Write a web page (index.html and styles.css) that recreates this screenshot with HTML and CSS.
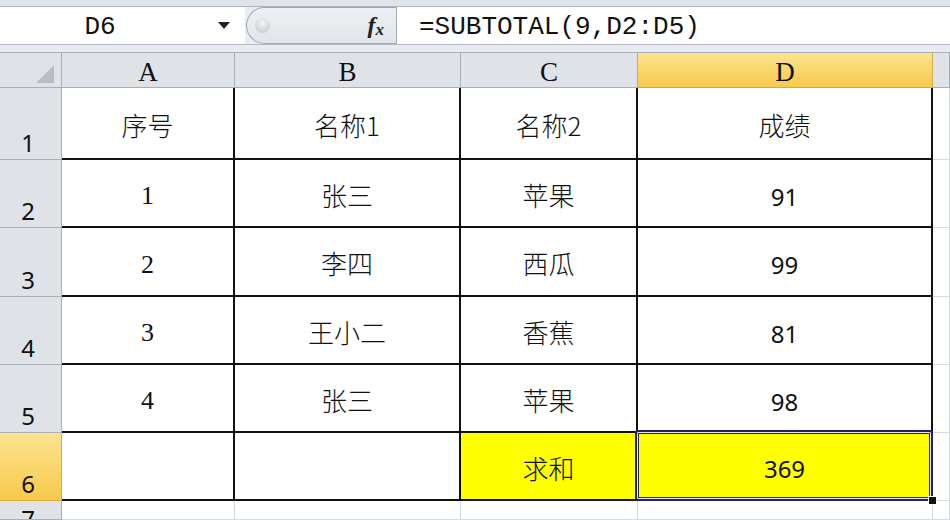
FILE: index.html
```html
<!DOCTYPE html>
<html lang="zh-CN">
<head>
<meta charset="utf-8">
<title>SUBTOTAL</title>
<link rel="stylesheet" href="styles.css">
</head>
<body>
<div class="app">
  <div class="topband"></div>
  <div class="fbar">
    <div class="namebox">
      <span class="name">D6</span>
      <span class="drop"></span>
    </div>
    <div class="ctrl">
      <span class="grip"></span>
      <span class="fx">f<sub>x</sub></span>
    </div>
    <div class="formula">=SUBTOTAL(9,D2:D5)</div>
  </div>
  <div class="gapband"></div>
  <div class="sheet">
    <div class="hd corner"><svg width="20" height="20" viewBox="0 0 20 20"><polygon points="19,1 19,19 1,19" fill="#b8bec6"/></svg></div>
    <div class="hd col">A</div>
    <div class="hd col">B</div>
    <div class="hd col">C</div>
    <div class="hd col on">D</div>
    <div class="hd col"></div>

    <div class="hd row">1</div>
    <div class="c cjk">序号</div>
    <div class="c cjk">名称1</div>
    <div class="c cjk">名称2</div>
    <div class="c cjk">成绩</div>
    <div class="g"></div>

    <div class="hd row">2</div>
    <div class="c serif">1</div>
    <div class="c cjk">张三</div>
    <div class="c cjk">苹果</div>
    <div class="c num">91</div>
    <div class="g"></div>

    <div class="hd row">3</div>
    <div class="c serif">2</div>
    <div class="c cjk">李四</div>
    <div class="c cjk">西瓜</div>
    <div class="c num">99</div>
    <div class="g"></div>

    <div class="hd row">4</div>
    <div class="c serif">3</div>
    <div class="c cjk">王小二</div>
    <div class="c cjk">香蕉</div>
    <div class="c num">81</div>
    <div class="g"></div>

    <div class="hd row">5</div>
    <div class="c serif">4</div>
    <div class="c cjk">张三</div>
    <div class="c cjk">苹果</div>
    <div class="c num">98</div>
    <div class="g"></div>

    <div class="hd row on">6</div>
    <div class="c"></div>
    <div class="c"></div>
    <div class="c cjk yel">求和</div>
    <div class="c num yel sel">369<span class="handle"></span></div>
    <div class="g"></div>

    <div class="hd row last">7</div>
    <div class="g"></div>
    <div class="g"></div>
    <div class="g"></div>
    <div class="g"></div>
    <div class="g"></div>
  </div>
</div>
</body>
</html>
```

FILE: styles.css
```css
html, body {
  margin: 0;
  padding: 0;
  background: #ffffff;
}
body {
  width: 950px;
  height: 520px;
  overflow: hidden;
  font-family: "Noto Sans CJK SC", "Noto Sans", sans-serif;
  color: #111;
}
.app {
  display: flex;
  flex-direction: column;
  height: 520px;
}
.topband {
  flex-shrink: 0;
  height: 6px;
  background: #dfe4ea;
  border-bottom: 1px solid #aeb5be;
}
.fbar {
  flex-shrink: 0;
  height: 37px;
  display: flex;
  background: #e9ecf0;
  border-bottom: 1px solid #b4bbc4;
}
.namebox {
  width: 245px;
  background: #fff;
  display: flex;
  align-items: center;
  position: relative;
}
.name {
  font-family: "Liberation Mono", monospace;
  font-size: 26px;
  width: 200px;
  text-align: center;
  padding-top: 3px;
}
.drop {
  width: 0;
  height: 0;
  border-left: 6px solid transparent;
  border-right: 6px solid transparent;
  border-top: 7px solid #222;
  margin-left: 18px;
}
.ctrl {
  width: 150px;
  margin-left: 1px;
  border: 1px solid #9fa7b2;
  border-right: none;
  border-radius: 19px 0 0 19px;
  background: linear-gradient(#eef0f3, #e1e5ea);
  display: flex;
  align-items: center;
  box-sizing: border-box;
  height: 37px;
}
.grip {
  width: 15px;
  height: 15px;
  border-radius: 50%;
  background: radial-gradient(circle at 50% 35%, #f3f4f6, #bfc4cb);
  margin-left: 8px;
}
.fx {
  margin-left: auto;
  margin-right: 12px;
  font-family: "Liberation Serif", serif;
  font-style: italic;
  font-weight: bold;
  font-size: 24px;
  color: #222;
  line-height: 1;
}
.fx sub {
  font-size: 17px;
  vertical-align: -2px;
}
.formula {
  flex: 1;
  background: #fff;
  border-left: 1px solid #a3abb5;
  font-family: "Liberation Mono", monospace;
  font-size: 26px;
  display: flex;
  align-items: center;
  padding-left: 22px;
  padding-top: 3px;
  box-sizing: border-box;
}
.gapband {
  flex-shrink: 0;
  height: 7px;
  background: #e8ebef;
  border-bottom: 1px solid #a9b0ba;
}
.sheet {
  flex: 1;
  min-height: 0;
  overflow: hidden;
  display: grid;
  grid-template-columns: 62px 173px 226px 177px 295px 1fr;
  grid-template-rows: 35px 72px 68px 69px 68px 68px 68px minmax(0, 1fr);
}
.sheet > div {
  box-sizing: border-box;
  min-height: 0;
  overflow: hidden;
}
.sheet > .sel {
  overflow: visible;
}
.hd {
  background: #dfe3e8;
  border-right: 1px solid #a7afb9;
  border-bottom: 1px solid #a7afb9;
  display: flex;
  justify-content: center;
}
.hd.on {
  background: linear-gradient(#fce48f, #f7c94c);
  border-color: #d9aa3e;
}
.corner {
  align-items: flex-end;
  justify-content: flex-end;
  padding: 0 6px 3px 0;
}
.col {
  align-items: center;
  font-family: "Liberation Serif", serif;
  font-size: 27px;
  padding-top: 4px;
}
.row {
  align-items: flex-end;
  font-family: "Noto Sans", sans-serif;
  font-size: 24px;
  line-height: 1;
  padding-bottom: 4px;
  padding-right: 5px;
}
.row.last {
  align-items: flex-start;
  padding-bottom: 0;
  padding-top: 6px;
}
.c {
  background: #fff;
  border-right: 2px solid #111;
  border-bottom: 2px solid #111;
  display: flex;
  align-items: center;
  justify-content: center;
  padding-top: 2px;
}
.cjk {
  font-family: "Noto Sans CJK SC", sans-serif;
  font-size: 26px;
  font-weight: 300;
}
.serif {
  font-family: "Liberation Serif", serif;
  font-size: 26px;
  padding-top: 6px;
}
.num {
  font-family: "Noto Sans", sans-serif;
  font-size: 24px;
  padding-top: 6px;
}
.yel {
  background: #ffff00;
}
.sel {
  position: relative;
  padding-top: 4px;
}
.sel::after {
  content: "";
  position: absolute;
  left: -3px;
  top: -3px;
  right: -2px;
  bottom: -2px;
  border: 2px solid #26245f;
  border-radius: 3px;
  box-shadow: inset 0 0 0 1px #e6e8ff, inset 0 0 0 2px #26245f;
}
.handle {
  position: absolute;
  right: -6px;
  bottom: -6px;
  width: 7px;
  height: 7px;
  background: #111;
  border: 1px solid #fff;
  z-index: 2;
}
.g {
  background: #fff;
  border-right: 1px solid #d6dae0;
  border-bottom: 1px solid #d6dae0;
}
```
